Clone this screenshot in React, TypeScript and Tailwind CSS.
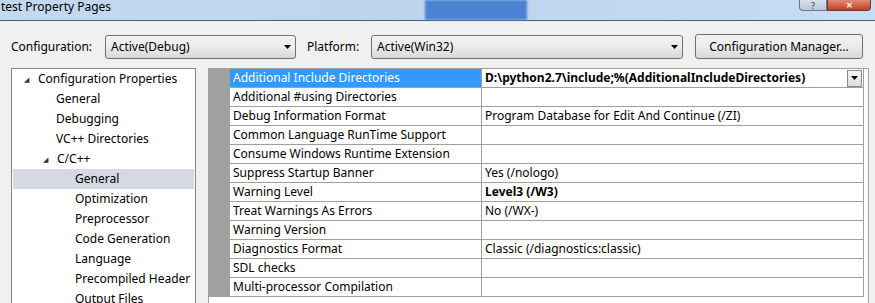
const treeItems: { label: string; indent: number; arrow?: boolean; selected?: boolean }[] = [
  { label: 'Configuration Properties', indent: 37, arrow: true },
  { label: 'General', indent: 56 },
  { label: 'Debugging', indent: 56 },
  { label: 'VC++ Directories', indent: 56 },
  { label: 'C/C++', indent: 56, arrow: true },
  { label: 'General', indent: 75, selected: true },
  { label: 'Optimization', indent: 75 },
  { label: 'Preprocessor', indent: 75 },
  { label: 'Code Generation', indent: 75 },
  { label: 'Language', indent: 75 },
  { label: 'Precompiled Header', indent: 75 },
  { label: 'Output Files', indent: 75 },
];

const props: { name: string; value: string; bold?: boolean; selected?: boolean }[] = [
  { name: 'Additional Include Directories', value: 'D:\\python2.7\\include;%(AdditionalIncludeDirectories)', bold: true, selected: true },
  { name: 'Additional #using Directories', value: '' },
  { name: 'Debug Information Format', value: 'Program Database for Edit And Continue (/ZI)' },
  { name: 'Common Language RunTime Support', value: '' },
  { name: 'Consume Windows Runtime Extension', value: '' },
  { name: 'Suppress Startup Banner', value: 'Yes (/nologo)' },
  { name: 'Warning Level', value: 'Level3 (/W3)', bold: true },
  { name: 'Treat Warnings As Errors', value: 'No (/WX-)' },
  { name: 'Warning Version', value: '' },
  { name: 'Diagnostics Format', value: 'Classic (/diagnostics:classic)' },
  { name: 'SDL checks', value: '' },
  { name: 'Multi-processor Compilation', value: '' },
];

function Arrow() {
  return (
    <svg width="7" height="4" viewBox="0 0 7 4" className="shrink-0">
      <path d="M0 0h7L3.5 4z" fill="#000" />
    </svg>
  );
}

function Combo({ value, width }: { value: string; width: string }) {
  return (
    <div
      className={`${width} h-[24px] flex items-center justify-between pl-[5px] pr-[4px] rounded-[3px] border border-[#707070] bg-gradient-to-b from-[#f2f2f2] via-[#ebebeb] to-[#d8d8d8]`}
    >
      <span>{value}</span>
      <Arrow />
    </div>
  );
}

export default function App() {
  return (
    <div
      className="w-[875px] h-[303px] overflow-hidden bg-[#f0f0f0] text-[12px] text-black"
      style={{ fontFamily: '"Noto Sans", "Open Sans", sans-serif' }}
    >
      {/* title bar */}
      <div className="relative h-[21px] border-b border-[#4d5d73] bg-gradient-to-r from-[#c3d9f0] via-[#bcd4ee] to-[#c8ddf2]">
        <div className="absolute left-[1px] top-0 text-[12px] leading-[14px]">test Property Pages</div>
        <div className="absolute left-[425px] top-0 w-[102px] h-[20px] bg-[#4c82d2] blur-[1px]" />
        <div className="absolute left-[799px] top-0 w-[28px] h-[11px] rounded-bl-[4px] border border-t-0 border-[#6d7a8c] bg-gradient-to-b from-[#d8e2ee] to-[#b9c6d6] flex items-center justify-center text-[9px] leading-[9px] text-[#334]">
          ?
        </div>
        <div className="absolute left-[827px] top-0 w-[44px] h-[11px] rounded-br-[4px] border border-t-0 border-[#6d3a30] bg-gradient-to-b from-[#e08a74] to-[#c23b22] flex items-center justify-center text-white text-[8px] font-bold leading-[8px]">
          ✕
        </div>
      </div>

      {/* config row */}
      <div className="flex items-center h-[25px] mt-[13px] pl-[11px]">
        <span className="w-[94px]">Configuration:</span>
        <Combo value="Active(Debug)" width="w-[191px]" />
        <span className="ml-[11px] w-[64px]">Platform:</span>
        <Combo value="Active(Win32)" width="w-[312px]" />
        <div className="ml-[12px] w-[168px] h-[25px] flex items-center justify-center rounded-[3px] border border-[#707070] bg-gradient-to-b from-[#f2f2f2] via-[#ebebeb] to-[#d8d8d8]">
          Configuration Manager...
        </div>
      </div>

      {/* panels */}
      <div className="flex mt-[9px] pl-[11px] gap-[12px]">
        <div className="w-[185px] h-[260px] border border-[#828790] bg-white px-[1px]">
          {treeItems.map((item, i) => (
            <div
              key={i}
              className={`h-[20px] flex items-center ${item.selected ? 'bg-[#d6d9e4]' : ''}`}
            >
              {item.arrow ? (
                <span
                  className="text-[7px] text-[#333] leading-none"
                  style={{ marginLeft: item.indent - 26, width: 14 }}
                >
                  ◢
                </span>
              ) : null}
              <span
                className="whitespace-nowrap"
                style={{ marginLeft: item.arrow ? 0 : item.indent - 13 }}
              >
                {item.label}
              </span>
            </div>
          ))}
        </div>

        <div className="w-[661px] h-[260px] border border-[#a0a0a0] bg-white pr-[4px]">
          <div className="flex">
            <div className="w-[21px] bg-[#a0a0a0]" />
            <div className="flex-1 border-r border-[#a0a0a0]">
              {props.map((p, i) => (
                <div key={i} className="flex h-[19px] border-b border-[#a0a0a0]">
                  <div
                    className={`w-[252px] border-r border-[#a0a0a0] pl-[3px] flex items-center whitespace-nowrap ${
                      p.selected ? 'bg-[#3399ff] text-white' : ''
                    }`}
                  >
                    {p.name}
                  </div>
                  <div className={`flex-1 flex items-center pl-[3px] pr-[1px] whitespace-nowrap ${p.bold ? 'font-bold' : ''}`}>
                    <span className="flex-1">{p.value}</span>
                    {p.selected ? (
                      <div className="w-[15px] h-[17px] border border-[#8a8a8a] bg-gradient-to-b from-[#f4f4f4] to-[#dcdcdc] flex items-center justify-center">
                        <Arrow />
                      </div>
                    ) : null}
                  </div>
                </div>
              ))}
            </div>
          </div>
        </div>
      </div>
    </div>
  );
}
